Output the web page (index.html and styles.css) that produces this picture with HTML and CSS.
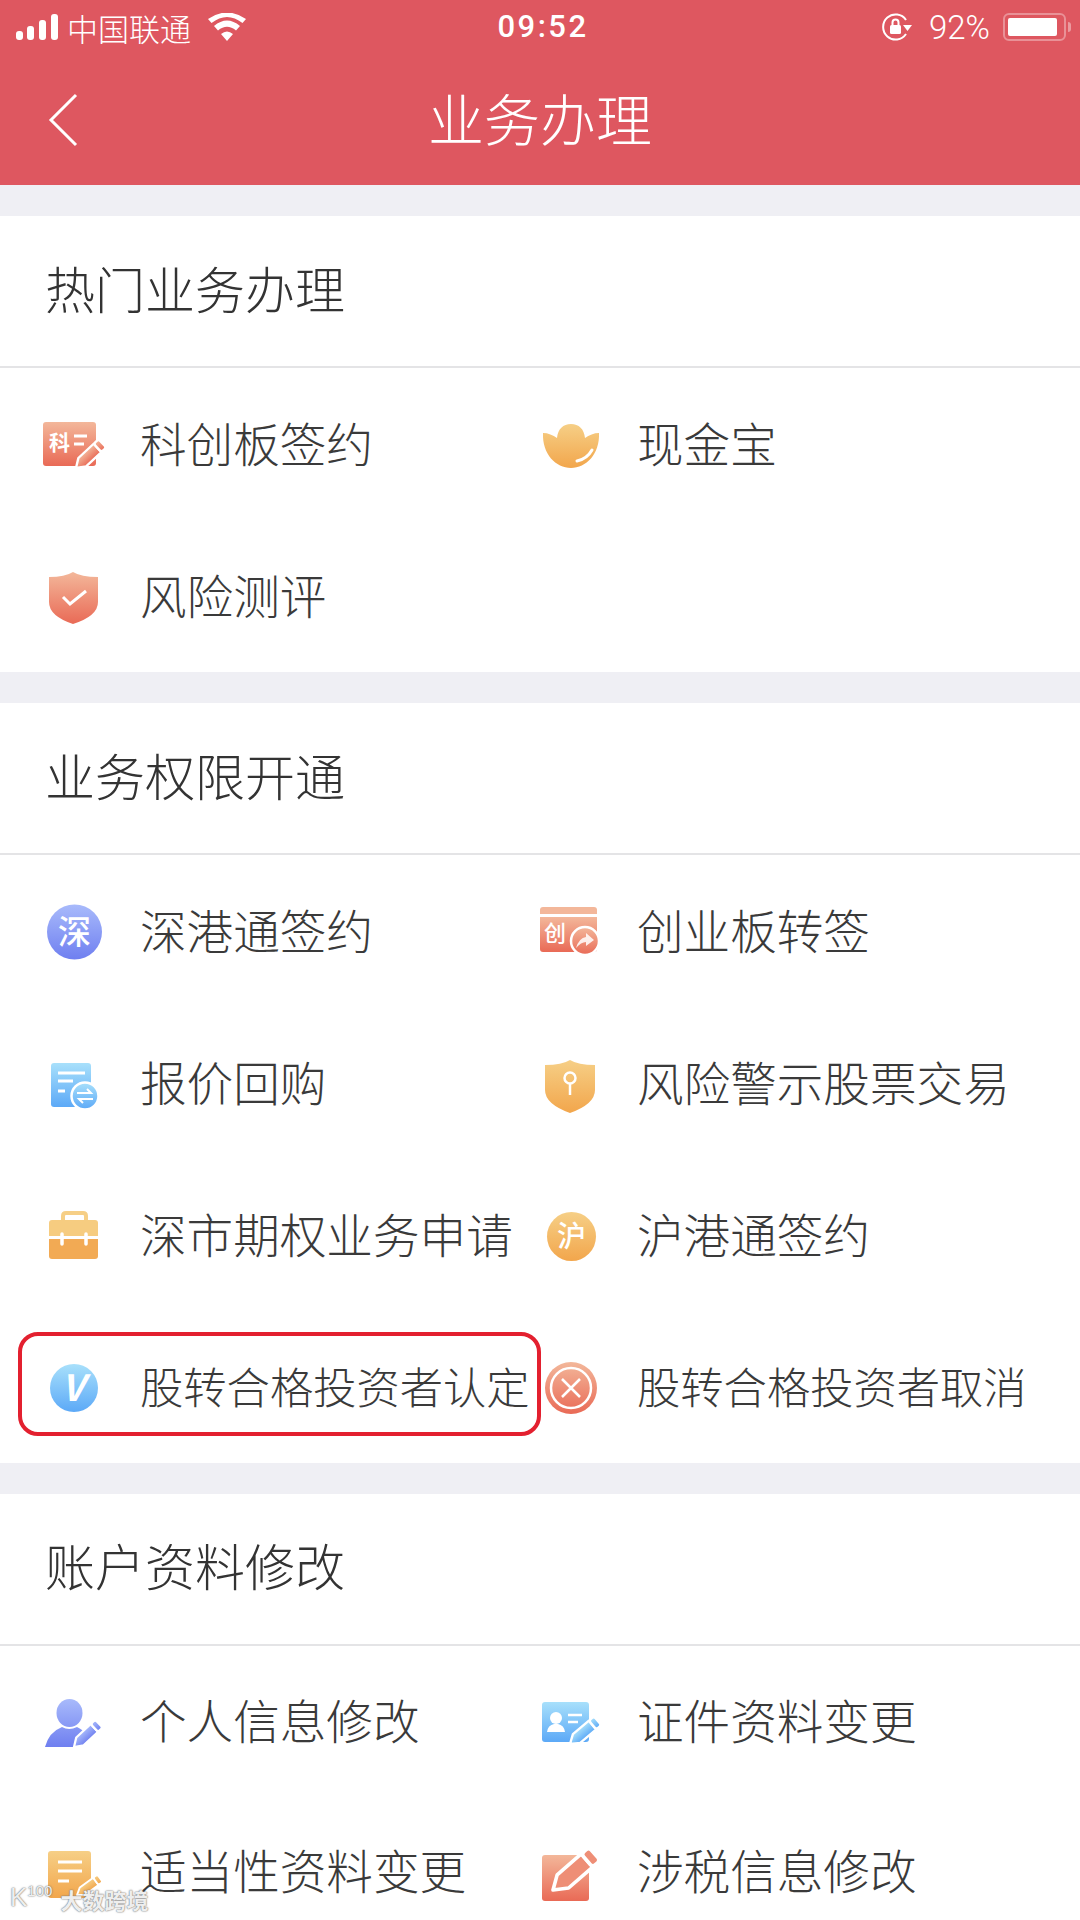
FILE: index.html
```html
<!DOCTYPE html>
<html lang="zh-CN">
<head>
    <meta charset="UTF-8">
    <meta name="viewport" content="width=device-width, initial-scale=1.0">
    <title>业务办理</title>
    <link rel="stylesheet" href="styles.css">
</head>
<body>
    <!-- shared gradients and the pencil used by several icons -->
    <svg class="defs" width="0" height="0" aria-hidden="true">
        <defs>
            <linearGradient id="peach" x1="0" y1="0" x2="0" y2="1"><stop offset="0" stop-color="#f3b79a"/><stop offset="1" stop-color="#e96a56"/></linearGradient>
            <linearGradient id="gold" x1="0" y1="0" x2="0" y2="1"><stop offset="0" stop-color="#f6cf86"/><stop offset="1" stop-color="#f2a64c"/></linearGradient>
            <linearGradient id="violet" x1="0" y1="0" x2="0" y2="1"><stop offset="0" stop-color="#a8bafb"/><stop offset="1" stop-color="#6f7ff0"/></linearGradient>
            <linearGradient id="sky" x1="0" y1="0" x2="0" y2="1"><stop offset="0" stop-color="#a8e0fb"/><stop offset="1" stop-color="#5ca9f7"/></linearGradient>
            <linearGradient id="person" gradientUnits="userSpaceOnUse" x1="0" y1="10" x2="0" y2="58"><stop offset="0" stop-color="#a8bafb"/><stop offset="1" stop-color="#6f7ff0"/></linearGradient>
            <g id="pencil">
                <path d="M0 0 L9 -6 L31 -6 L31 6 L9 6 Z" stroke="#fff" stroke-width="2.500" stroke-linejoin="round"/>
                <rect x="31" y="-6" width="7" height="12" rx="2.500" stroke="#fff" stroke-width="2.500"/>
            </g>
        </defs>
    </svg>

    <div class="page">
        <header class="top">
            <div class="status">
                <div class="status-left">
                    <svg class="signal" width="42" height="26" viewBox="0 0 42 26"><rect x="0" y="17" width="7" height="9" rx="3" fill="#fff"/><rect x="11" y="12" width="7" height="14" rx="3" fill="#fff"/><rect x="23" y="6" width="7" height="20" rx="3" fill="#fff"/><rect x="35" y="0" width="7" height="26" rx="3" fill="#fff"/></svg>
                    <span class="carrier">中国联通</span>
                    <svg class="wifi" width="38" height="28" viewBox="0 0 38 28"><path d="M19 28 L13 21 Q19 16 25 21 Z M10 17.500 L6 13 Q19 2 32 13 L28 17.500 Q19 10 10 17.500 Z M3.500 10 L0 6 Q19 -7 38 6 L34.500 10 Q19 -2 3.500 10 Z" fill="#fff"/></svg>
                </div>
                <span class="time">09:52</span>
                <div class="status-right">
                    <svg class="lock" width="31" height="30" viewBox="0 0 31 30"><path d="M25 22 A12.500 12.500 0 1 1 25 8" fill="none" stroke="#fff" stroke-width="2"/><path d="M22 13 L31 13 L26.500 19 Z" fill="#fff"/><rect x="9" y="13" width="11" height="9" rx="1.500" fill="#fff"/><path d="M11.500 13 V10.500 A3 3 0 0 1 17.500 10.500 V13" fill="none" stroke="#fff" stroke-width="2"/></svg>
                    <span class="percent">92%</span>
                    <div class="battery"><div class="battery-fill"></div></div>
                    <div class="battery-cap"></div>
                </div>
            </div>
            <div class="nav">
                <svg class="back" width="30" height="54" viewBox="0 0 30 54"><path d="M28 2 L3 27 L28 52" fill="none" stroke="#fff" stroke-width="3"/></svg>
                <h1>业务办理</h1>
            </div>
        </header>

        <section class="group">
            <h2>热门业务办理</h2>
            <div class="items">
                <div class="item">
                    <svg class="icon" viewBox="0 0 64 64"><rect x="2" y="10" width="53" height="44" rx="3" fill="url(#peach)"/><text x="8" y="38" class="glyph" font-size="21" font-weight="700">科</text><path d="M33 24 H46 M33 32 H43" stroke="#fff" stroke-width="3"/><use href="#pencil" transform="translate(35 56) rotate(-43) scale(0.95)" fill="url(#peach)"/></svg>
                    <span>科创板签约</span>
                </div>
                <div class="item">
                    <svg class="icon" viewBox="0 0 64 64"><path d="M5 21 C10 21 15 23 19 26 C20 17 25 12 33 12 C41 12 46 17 47 26 C51 23 56 21 61 21 C62 42 48 56 33 56 C18 56 4 42 5 21 Z" fill="url(#gold)"/><path d="M39 49 Q49 47 54 38" fill="none" stroke="#fff" stroke-width="3" stroke-linecap="round"/></svg>
                    <span>现金宝</span>
                </div>
                <div class="item">
                    <svg class="icon" viewBox="0 0 64 64"><path d="M8 13 Q24 13 32 8 Q40 13 57 13 V38 Q57 52 32 60 Q8 52 8 38 Z" fill="url(#peach)"/><path d="M22 33 L29 40 L45 27" fill="none" stroke="#fff" stroke-width="3"/></svg>
                    <span>风险测评</span>
                </div>
            </div>
        </section>

        <section class="group">
            <h2>业务权限开通</h2>
            <div class="items">
                <div class="item">
                    <svg class="icon" viewBox="0 0 64 64"><circle cx="33.500" cy="33" r="27.500" fill="url(#violet)"/><text x="33.500" y="45" text-anchor="middle" class="glyph" font-size="33" font-weight="500">深</text></svg>
                    <span>深港通签约</span>
                </div>
                <div class="item">
                    <svg class="icon" viewBox="0 0 64 64"><path d="M2 15 V11 Q2 8 5 8 H56 Q59 8 59 11 V15 Z" fill="#f3b79a"/><path d="M2 18 H59 V50 Q59 53 56 53 H5 Q2 53 2 50 Z" fill="url(#peach)"/><text x="6" y="42" class="glyph" font-size="22" font-weight="500">创</text><circle cx="47" cy="42" r="14" fill="url(#peach)" stroke="#fff" stroke-width="2.500"/><path d="M38 49 Q41 39 48 38 V34 L56 41 L48 47 V43 Q43 43 38 49 Z" fill="#fff" opacity="0.85"/></svg>
                    <span>创业板转签</span>
                </div>
                <div class="item">
                    <svg class="icon" viewBox="0 0 64 64"><rect x="10" y="12" width="40" height="44" rx="3" fill="url(#sky)"/><path d="M17 22 H44 M17 30 H32 M17 40 H24" stroke="#fff" stroke-width="3"/><circle cx="44" cy="45" r="13.500" fill="url(#sky)" stroke="#fff" stroke-width="2.500"/><path d="M36 42 H50 L46 38 M52 48 H38 L42 52" fill="none" stroke="#fff" stroke-width="2"/></svg>
                    <span>报价回购</span>
                </div>
                <div class="item">
                    <svg class="icon" viewBox="0 0 64 64"><path d="M7 14 Q24 14 32 9 Q40 14 57 14 V39 Q57 53 32 62 Q7 53 7 39 Z" fill="url(#gold)"/><circle cx="32" cy="27" r="5.500" fill="none" stroke="#fff" stroke-width="2.500"/><path d="M32 33 V44" stroke="#fff" stroke-width="2.500"/></svg>
                    <span>风险警示股票交易</span>
                </div>
                <div class="item">
                    <svg class="icon" viewBox="0 0 64 64"><path d="M22 17 V13 Q22 10 25 10 H42 Q45 10 45 13 V17" fill="none" stroke="#f6cf86" stroke-width="4"/><path d="M8 20 Q8 17 11 17 H54 Q57 17 57 20 V33 H8 Z" fill="#f6cc80"/><path d="M8 36 H57 V53 Q57 56 54 56 H11 Q8 56 8 53 Z" fill="#f2aa54"/><path d="M21 31 V41 M45 31 V41" stroke="#fff" stroke-width="3.500" stroke-linecap="round"/></svg>
                    <span>深市期权业务申请</span>
                </div>
                <div class="item">
                    <svg class="icon" viewBox="0 0 64 64"><circle cx="33.500" cy="33.500" r="24.500" fill="url(#gold)"/><text x="33.500" y="44" text-anchor="middle" class="glyph" font-size="29" font-weight="500">沪</text></svg>
                    <span>沪港通签约</span>
                </div>
                <div class="item picked">
                    <svg class="icon" viewBox="0 0 64 64"><circle cx="33" cy="33" r="24" fill="url(#sky)"/><text x="32" y="46" text-anchor="middle" class="glyph" font-size="36" font-weight="700" font-style="italic">V</text></svg>
                    <span class="tight">股转合格投资者认定</span>
                </div>
                <div class="item">
                    <svg class="icon" viewBox="0 0 64 64"><circle cx="33" cy="33" r="26" fill="url(#peach)"/><circle cx="33" cy="33" r="20" fill="none" stroke="#fff" stroke-width="2.500"/><path d="M24 24 L42 42 M42 24 L24 42" stroke="#fff" stroke-width="2.500"/></svg>
                    <span class="tight">股转合格投资者取消</span>
                </div>
            </div>
        </section>

        <section class="group group-last">
            <h2>账户资料修改</h2>
            <div class="items">
                <div class="item">
                    <svg class="icon" viewBox="0 0 64 64"><ellipse cx="28.500" cy="24" rx="13" ry="14" fill="url(#person)"/><path d="M4 58 Q8 43 21 38 Q28 42 36 38 Q42 41 44 44 L32 58 Z" fill="url(#person)"/><use href="#pencil" transform="translate(33 58) rotate(-43) scale(0.9)" fill="url(#violet)"/></svg>
                    <span>个人信息修改</span>
                </div>
                <div class="item">
                    <svg class="icon" viewBox="0 0 64 64"><rect x="4" y="13" width="47" height="40" rx="3" fill="url(#sky)"/><circle cx="18" cy="29" r="6" fill="#fff"/><path d="M9 43 Q10 36 16 35 H20 Q26 36 27 43 Z" fill="#fff"/><path d="M30 26 H44 M30 33 H40" stroke="#fff" stroke-width="2.500"/><use href="#pencil" transform="translate(32 55) rotate(-40) scale(0.95)" fill="url(#sky)"/></svg>
                    <span>证件资料变更</span>
                </div>
                <div class="item">
                    <svg class="icon" viewBox="0 0 64 64"><rect x="7" y="12" width="43" height="47" rx="3" fill="url(#gold)"/><path d="M17 23 H41 M17 32 H41 M17 42 H28" stroke="#fff" stroke-width="3"/><use href="#pencil" transform="translate(36 56) rotate(-36) scale(0.75)" fill="url(#gold)"/></svg>
                    <span>适当性资料变更</span>
                </div>
                <div class="item">
                    <svg class="icon" viewBox="0 0 64 64"><rect x="4" y="16" width="47" height="46" rx="3" fill="url(#peach)"/><use href="#pencil" transform="translate(15 51) rotate(-41) scale(1.45)" fill="#ee8e76"/></svg>
                    <span>涉税信息修改</span>
                </div>
            </div>
        </section>

        <div class="watermark">
            <span class="wm-logo">K<sup>100</sup></span>
            <span class="wm-name">大数跨境</span>
        </div>
    </div>
</body>
</html>
```

FILE: styles.css
```css
html, body {
    margin: 0;
    padding: 0;
}

body {
    font-family: "Noto Sans CJK SC", "Noto Sans", sans-serif;
    color: #3a3a3a;
    background: #efeff4;
}

.defs {
    position: absolute;
}

.page {
    position: relative;
    width: 1080px;
    height: 1920px;
    overflow: hidden;
}

/* red header */
.top {
    height: 185px;
    background: #de5760;
    color: #fff;
}

.status {
    height: 54px;
    display: grid;
    grid-template-columns: 1fr auto 1fr;
    align-items: center;
}

.status-left {
    display: flex;
    align-items: center;
    padding-left: 16px;
}

.carrier {
    font-size: 31px;
    font-weight: 300;
    margin-left: 9px;
    margin-right: 17px;
}

.time {
    font-family: Roboto, "Liberation Sans", sans-serif;
    font-size: 31px;
    font-weight: 500;
    letter-spacing: 2.500px;
    padding-left: 6px;
    padding-bottom: 2px;
}

.status-right {
    display: flex;
    align-items: center;
    justify-content: flex-end;
    padding-right: 9px;
}

.lock {
    margin-right: 3px;
}

.percent {
    font-family: Roboto, "Liberation Sans", sans-serif;
    font-size: 33px;
    font-weight: 300;
    margin-left: 14px;
    margin-right: 13px;
}

.battery {
    box-sizing: border-box;
    width: 63px;
    height: 28px;
    padding: 3px;
    border: 2px solid rgba(255, 255, 255, 0.35);
    border-radius: 6px;
}

.battery-fill {
    width: 92%;
    height: 100%;
    background: #fff;
    border-radius: 2px;
}

.battery-cap {
    width: 3px;
    height: 10px;
    margin-left: 2px;
    background: rgba(255, 255, 255, 0.4);
    border-radius: 0 3px 3px 0;
}

.nav {
    height: 131px;
    display: grid;
    grid-template-columns: 1fr auto 1fr;
    align-items: center;
}

.back {
    grid-column: 1;
    grid-row: 1;
    margin-left: 48px;
}

.nav h1 {
    grid-column: 2;
    margin: 0;
    padding-bottom: 6px;
    font-size: 56px;
    font-weight: 300;
    line-height: 1;
}

/* sections */
.group {
    margin-top: 31px;
    background: #fff;
}

.group h2 {
    height: 150px;
    line-height: 143px;
    margin: 0;
    padding-left: 45px;
    font-size: 50px;
    font-weight: 300;
    color: #333;
    border-bottom: 2px solid #e4e4e6;
}

.items {
    display: grid;
    grid-template-columns: 497px 1fr;
    grid-auto-rows: 152px;
    padding-left: 41px;
}

.group-last h2 {
    line-height: 140px;
}

.group-last .items {
    grid-auto-rows: 150px;
}

.item {
    position: relative;
    display: flex;
    align-items: center;
    gap: 35px;
    font-size: 46.600px;
    font-weight: 300;
    white-space: nowrap;
}

.item span {
    padding-bottom: 5px;
}

.icon {
    flex: none;
    width: 64px;
    height: 64px;
    overflow: visible;
}

.glyph {
    fill: #fff;
}

.item .tight {
    font-size: 43.300px;
}

/* red box round the chosen item */
.picked::after {
    content: "";
    position: absolute;
    left: -23px;
    top: 21px;
    width: 515px;
    height: 96px;
    border: 4px solid #e3202f;
    border-radius: 20px;
}

/* stamp in the corner */
.watermark {
    position: absolute;
    left: 10px;
    bottom: 10px;
    display: flex;
    align-items: flex-end;
    gap: 8px;
    color: rgba(255, 255, 255, 0.9);
    text-shadow: 0 0 2px #777, 0 0 1px #777;
    line-height: 1;
}

.wm-logo {
    font-family: "Liberation Sans", sans-serif;
    font-size: 26px;
}

.wm-logo sup {
    font-size: 15px;
    vertical-align: 10px;
    line-height: 0;
}

.wm-name {
    font-size: 22px;
    font-weight: 700;
}
```
